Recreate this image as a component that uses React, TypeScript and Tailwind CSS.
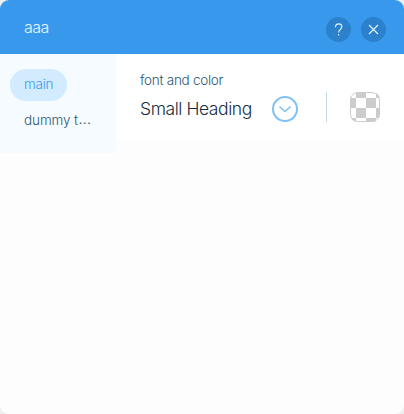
import React from "react";

const font = "font-['Inter','Liberation_Sans',sans-serif]";

function HeaderButton({ label, children }: { label: string; children: React.ReactNode }) {
  return (
    <button aria-label={label} className="flex size-[25px] items-center justify-center rounded-full bg-[#2b81cb]">
      {children}
    </button>
  );
}

function Checkerboard() {
  return (
    <svg width="30" height="30" viewBox="0 0 30 30" className="block">
      <defs>
        <clipPath id="swatch"><rect width="30" height="30" rx="8" /></clipPath>
      </defs>
      <g clipPath="url(#swatch)">
        <rect width="30" height="30" fill="#fff" />
        <path fill="#ccc" d="M6 0h10v6H6zM26 0h4v6h-4zM0 6h6v10H0zM16 6h10v10H16zM6 16h10v10H6zM26 16h4v10h-4zM0 26h6v4H0zM16 26h10v4H16z" />
      </g>
      <rect x="0.5" y="0.5" width="29" height="29" rx="7.5" fill="none" stroke="#ccc" />
    </svg>
  );
}

export default function App() {
  return (
    <div className={`${font} h-[414px] w-[404px] bg-[#eeeeee] font-light`}>
      <div className="flex h-full flex-col overflow-hidden rounded-[9px] bg-[#fdfdfd]">
        <header className="flex h-[54px] shrink-0 items-center justify-between bg-[#3899ec] pt-[5px] pr-[18px] pl-6">
          <h1 className="-mt-[5px] text-[16px] leading-6 tracking-[-0.6px] text-[#eaf7ff]">aaa</h1>
          <div className="flex gap-[10px]">
            <HeaderButton label="Help">
              <svg width="25" height="25" viewBox="0 0 25 25" fill="none" stroke="#eaf7ff" strokeWidth="1.1">
                <path d="M9.500 10.300C9.500 8 10.800 6.900 12.600 6.900s3.200 1.100 3.200 2.900c0 2.500-3.200 2.700-3.200 5.700" />
                <path d="M12.600 17v1.600" />
              </svg>
            </HeaderButton>
            <HeaderButton label="Close">
              <svg width="25" height="25" viewBox="0 0 25 25" fill="none" stroke="#eaf7ff" strokeWidth="1.1">
                <path d="M8 8l9 9M17 8l-9 9" />
              </svg>
            </HeaderButton>
          </div>
        </header>
        <div className="flex items-start">
          <nav className="flex h-[99px] w-[116px] shrink-0 flex-col items-start gap-1 bg-[#f5fbff] pt-[15px] pl-[10px] text-[13.5px]">
            <button className="flex h-8 w-[57px] items-center rounded-full bg-[#d3ebff] pb-[2px] pl-[14px] tracking-[-0.25px] text-[#3899ec]">main</button>
            <button className="flex h-8 items-center pb-[2px] pl-[14px] tracking-[-0.1px] text-[#2b5672]">
              dummy t<span className="tracking-normal font-['Liberation_Sans',sans-serif]">…</span>
            </button>
          </nav>
          <main className="flex h-[86px] flex-1 items-start bg-white pl-6">
            <div className="w-[132px] pt-4">
              <div className="text-[13.5px] leading-5 tracking-[-0.27px] whitespace-nowrap text-[#2b5672]">font and color</div>
              <div className="mt-[7px] text-[17.5px] leading-6 tracking-[-0.43px] whitespace-nowrap text-[#162d3d]">Small Heading</div>
            </div>
            <svg width="26" height="26" viewBox="0 0 26 26" fill="none" stroke="#7fc0f5" strokeWidth="2" className="mt-[42px]">
              <circle cx="13" cy="13" r="12" />
              <path d="M7.500 10.500l5.500 5 5.500-5" strokeWidth="1.500" />
            </svg>
            <div className="mt-[38px] ml-7 h-[30px] w-px bg-[#c8d9e6]" />
            <div className="mt-[38px] ml-[23px]"><Checkerboard /></div>
          </main>
        </div>
      </div>
    </div>
  );
}
